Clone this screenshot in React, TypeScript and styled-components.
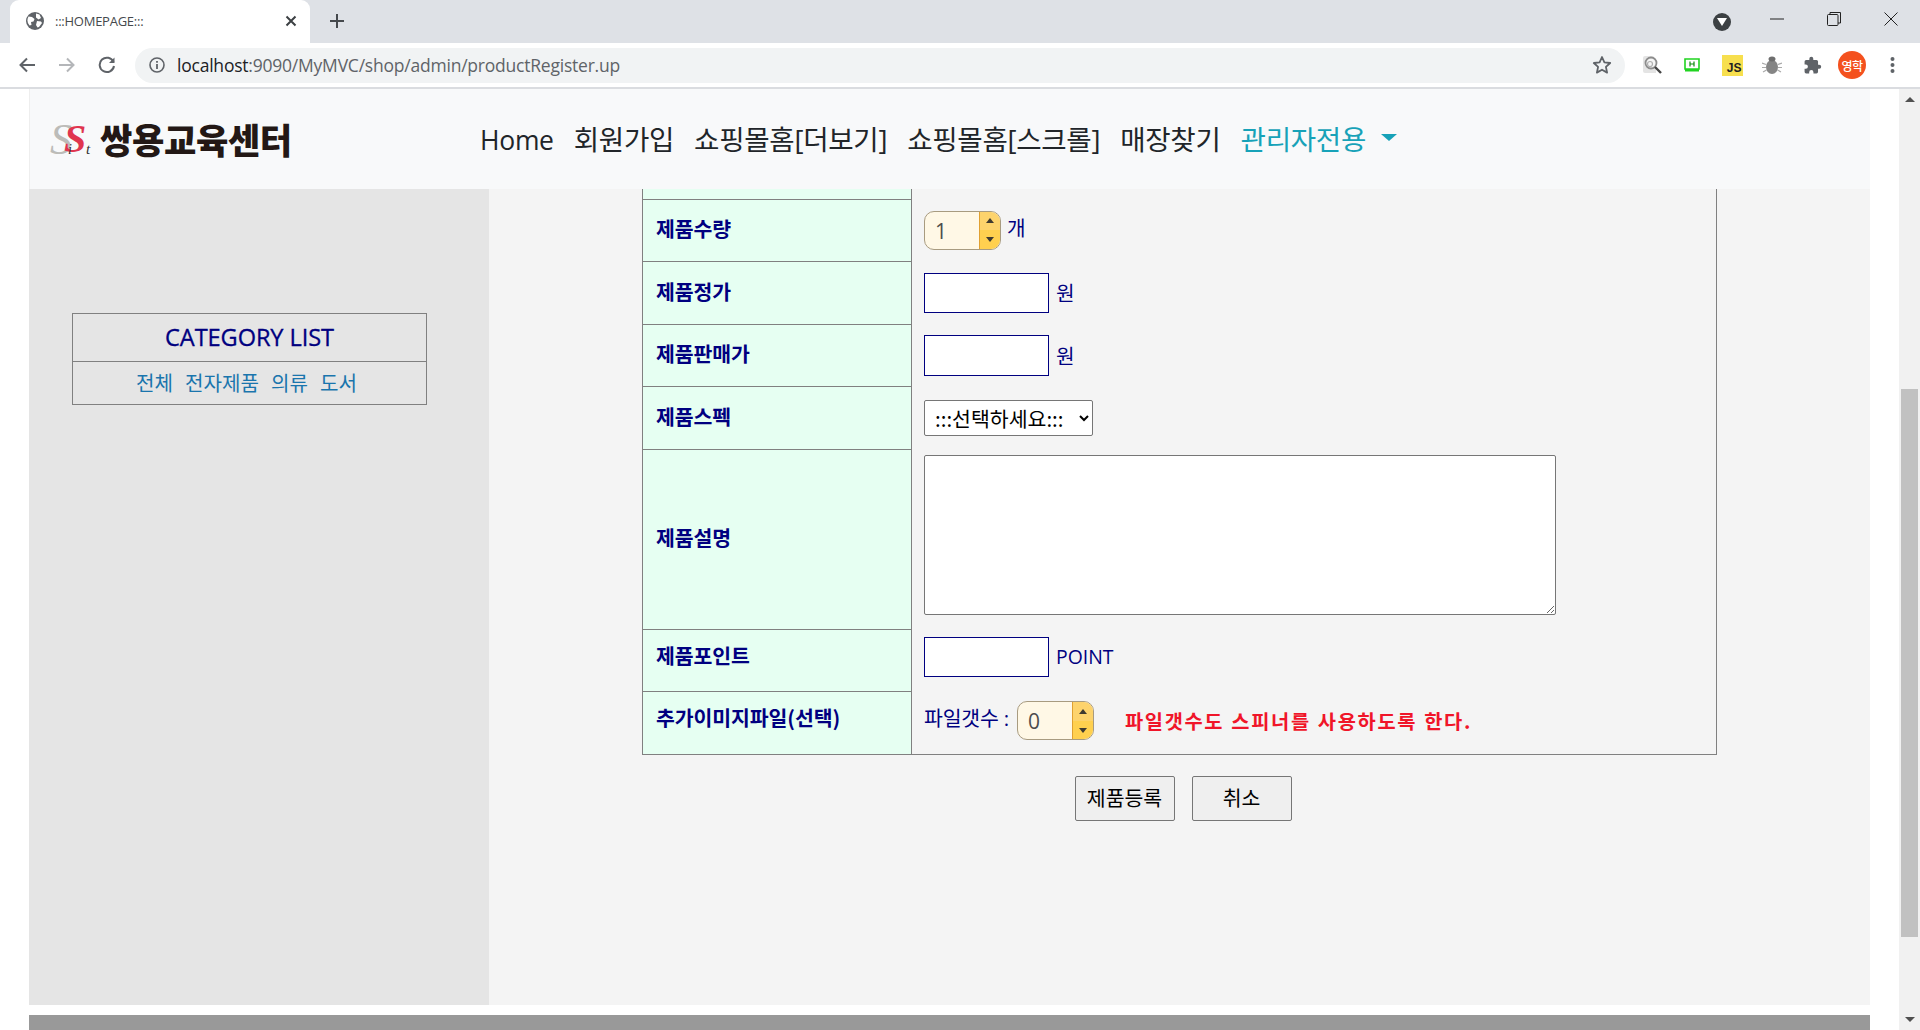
import React from "react";
import styled, { createGlobalStyle } from "styled-components";

const Global = createGlobalStyle`
  html, body { margin: 0; padding: 0; height: 100%; overflow: hidden; background: #fff; }
  body { font-family: "Open Sans", "Noto Sans CJK KR", sans-serif; }
  #root { height: 100%; }
  * { box-sizing: border-box; }
`;

const KR = `"Noto Sans CJK KR", "Noto Sans", sans-serif`;
const LAT = `"Open Sans", "Noto Sans CJK KR", sans-serif`;

const Shell = styled.div`display:flex;flex-direction:column;width:1920px;height:1030px;overflow:hidden;`;

/* browser chrome */
const TabStrip = styled.div`height:43px;background:#dee1e6;display:flex;align-items:flex-end;padding-left:10px;flex:none;`;
const Tab = styled.div`width:300px;height:43px;background:#fff;border-radius:9px 9px 0 0;display:flex;align-items:center;padding:0 13px 2px 16px;gap:11px;`;
const TabTitle = styled.span`flex:1;font:13px ${LAT};letter-spacing:-.25px;color:#45494d;`;
const NewTab = styled.div`margin:0 0 7px 15px;width:24px;height:30px;display:flex;align-items:center;justify-content:center;`;
const WindowControls = styled.div`margin-left:auto;display:flex;align-items:center;height:43px;padding-right:1px;`;
const ProfileCircle = styled.div`width:18px;height:18px;border-radius:50%;background:#3c4043;display:flex;align-items:center;justify-content:center;margin-right:17px;`;
const WinBtn = styled.div`width:57px;height:36px;display:flex;align-items:center;justify-content:center;margin-top:-5px;`;

const Toolbar = styled.div`height:46px;background:#fff;border-bottom:2px solid #dadce0;display:flex;align-items:center;flex:none;padding-left:18px;`;
const NavIcon = styled.div`width:40px;height:30px;display:flex;align-items:center;justify-content:flex-start;flex:none;`;
const Omnibox = styled.div`margin-left:-3px;width:1490px;height:35px;background:#f1f3f4;border-radius:18px;display:flex;align-items:center;padding:0 13px 0 14px;gap:12px;flex:none;`;
const Url = styled.div`flex:1;font:17.5px ${LAT};letter-spacing:-.22px;color:#5f6368;white-space:nowrap;`;
const UrlHost = styled.span`color:#202124;`;
const Ext = styled.div`width:40px;height:30px;display:flex;align-items:center;justify-content:center;flex:none;`;
const Extensions = styled.div`display:flex;align-items:center;margin-left:7px;`;
const Avatar = styled.div`width:28px;height:28px;border-radius:50%;background:#f4511e;color:#fff;font:500 12px ${KR};display:flex;align-items:center;justify-content:center;letter-spacing:-.5px;`;
const JsBadge = styled.div`width:21px;height:21px;background:#f7df4e;color:#222;font:bold 12px "Liberation Sans",sans-serif;display:flex;align-items:flex-end;justify-content:flex-end;padding:0 1px 0 0;line-height:15px;`;

/* page */
const Viewport = styled.div`flex:1;display:flex;min-height:0;`;
const Page = styled.div`flex:1;padding:0 29px;display:flex;min-width:0;`;
const Main = styled.div`width:1841px;display:flex;flex-direction:column;`;

const Navbar = styled.nav`height:100px;background:#f8f9fa;display:flex;align-items:center;flex:none;padding-left:20px;border-left:1px solid #eee;`;
const Logo = styled.div`display:flex;align-items:center;width:430px;`;
const LogoText = styled.span`font:900 35.2px ${KR};color:#231815;letter-spacing:-.4px;margin-left:6px;line-height:1;`;
const NavList = styled.div`display:flex;align-items:center;gap:20px;padding-top:2px;`;
const NavItem = styled.a<{ $active?: boolean; $latin?: boolean }>`font:${p => (p.$latin ? 26.5 : 27.6)}px ${LAT};letter-spacing:-.3px;line-height:1;color:${p => (p.$active ? "#17a2b8" : "#212529")};white-space:nowrap;`;
const Caret = styled.span`display:inline-block;border-top:7px solid #17a2b8;border-left:8.5px solid transparent;border-right:8.5px solid transparent;margin-left:-5px;margin-bottom:6px;`;

const Body = styled.div`height:816px;display:flex;flex:none;`;
const Sidebar = styled.aside`width:460px;background:#e5e5e5;padding:124px 0 0 43px;flex:none;`;
const Category = styled.div`width:355px;border:1px solid #808080;`;
const CategoryTitle = styled.div`height:48px;border-bottom:1px solid #808080;display:flex;align-items:center;justify-content:center;padding-bottom:1px;font:500 23.6px ${LAT};color:#000080;letter-spacing:-.1px;-webkit-text-stroke:.3px #000080;`;
const CategoryLinks = styled.div`height:42px;display:flex;align-items:center;justify-content:center;gap:12px;padding:0 6px 2px 0;`;
const CategoryLink = styled.a`font:20.1px ${KR};color:#1a75ad;`;

const Content = styled.section`flex:1;background:#f4f4f4;padding-left:153px;`;
const Form = styled.table`width:1075px;border-collapse:collapse;table-layout:fixed;`;
const Row = styled.tr<{ $h: number }>`height:${p => p.$h}px;`;
const Label = styled.th<{ $up?: number; $cut?: boolean }>`width:269px;background:#e6fff2;border:1px solid #808080;${p => (p.$cut ? "border-top:0;" : "")}text-align:left;padding:0 0 ${p => 4 + (p.$up ?? 0)}px 13px;font:bold 20.5px ${KR};color:#000080;letter-spacing:-.1px;`;
const Field = styled.td<{ $last?: boolean; $pb?: number }>`border-left:1px solid #808080;border-right:1px solid #808080;${p => (p.$last ? "border-bottom:1px solid #808080;" : "")}padding:0 0 ${p => p.$pb ?? 0}px 12px;color:#000080;font:20.5px ${LAT};`;
const Inline = styled.div`display:flex;align-items:center;`;
const Unit = styled.span<{ $up?: number; $gap?: number; $latin?: boolean }>`margin-left:${p => p.$gap ?? 7}px;font:${p => (p.$latin ? 19.4 : 20.2)}px ${LAT};color:#000080;position:relative;top:${p => -(p.$up ?? 0)}px;`;
const TextInput = styled.input<{ $tall?: boolean }>`width:125px;height:${p => (p.$tall ? 41 : 40)}px;background:#fff;border:1.5px solid #000080;padding:0;display:block;`;
const SelectBox = styled.select`width:169px;height:36px;background:#fff;border:1px solid #767676;border-radius:2px;font:20.5px ${KR};padding:0 0 0 6px;color:#000;display:block;`;
const TextArea = styled.textarea`width:632px;height:160px;display:block;background:#fff;border:1px solid #767676;border-radius:2px;margin-top:-9px;`;
const Warn = styled.span`margin-left:31px;font:bold 19.8px ${KR};color:#f01529;letter-spacing:1.65px;word-spacing:1px;position:relative;white-space:nowrap;`;
const FileLabel = styled.span`font:20.5px ${LAT};color:#000080;margin-right:8px;position:relative;top:-4px;letter-spacing:-.2px;white-space:nowrap;`;

const SpinBox = styled.div`width:77px;height:39px;border:1px solid #a89b80;border-radius:10px;background:#fff8e6;display:flex;overflow:hidden;flex:none;`;
const SpinValue = styled.div`flex:1;font:21px ${LAT};color:#4d4d4d;display:flex;align-items:center;padding-left:10px;padding-top:1px;`;
const SpinBtns = styled.div`width:21px;border-left:1px solid #e0a030;display:flex;flex-direction:column;`;
const SpinBtn = styled.div<{ $down?: boolean }>`flex:1;background:${p => (p.$down ? "#ffd04f" : "#fdd36c")};display:flex;align-items:center;justify-content:center;`;
const Arrow = styled.span<{ $down?: boolean }>`border-left:4.5px solid transparent;border-right:4.5px solid transparent;${p => (p.$down ? "border-top:5px solid #3f3a30;" : "border-bottom:5px solid #3f3a30;")}`;

const Actions = styled.div`width:1076px;display:flex;justify-content:center;gap:17px;padding:21px 0 0 6px;`;
const Button = styled.button`width:100px;height:45px;background:#efefef;border:1px solid #767676;border-radius:2px;font:20.5px ${KR};color:#000;padding:0 0 3px;`;

const Gap = styled.div`height:10px;background:#fff;flex:none;`;
const Footer = styled.footer`flex:1;background:#999;`;

/* page scrollbar */
const Scrollbar = styled.div`width:21px;background:#f1f1f1;flex:none;display:flex;flex-direction:column;align-items:center;`;
const ScrollBtn = styled.div`height:21px;width:100%;display:flex;align-items:center;justify-content:center;flex:none;`;
const ScrollTrack = styled.div`flex:1;width:100%;padding:279px 2px 72px;display:flex;`;
const ScrollThumb = styled.div`flex:1;background:#c1c1c1;`;
const ScrollArrow = styled.span<{ $down?: boolean }>`border-left:5px solid transparent;border-right:5px solid transparent;${p => (p.$down ? "border-top:5px solid #505050;" : "border-bottom:5px solid #505050;")}`;

const Spinner = ({ value }: { value: number }) => (
  <SpinBox>
    <SpinValue>{value}</SpinValue>
    <SpinBtns>
      <SpinBtn><Arrow /></SpinBtn>
      <SpinBtn $down><Arrow $down /></SpinBtn>
    </SpinBtns>
  </SpinBox>
);

const Globe = () => (
  <svg width="18" height="18" viewBox="0 0 18 18">
    <circle cx="9" cy="9" r="9" fill="#5f6368" />
    <path d="M2.500 4.500l3.500.5 2.500 2-1 2.500-2.500.5.5 3-2 .5A8 8 0 0 1 2.500 4.500zM10 1.500l3.500 1 1.500 3.500-2.500 1.500L10 5.500zM11 9l4 .5 1 1.500-3 4-1.500.5L10 13z" fill="#fff" />
  </svg>
);

export default function App() {
  return (
    <Shell>
      <Global />
      <TabStrip>
        <Tab>
          <Globe />
          <TabTitle>:::HOMEPAGE:::</TabTitle>
          <svg width="12" height="12" viewBox="0 0 12 12"><path d="M1.500 1.500l9 9M10.500 1.500l-9 9" stroke="#3c4043" strokeWidth="2" /></svg>
        </Tab>
        <NewTab>
          <svg width="16" height="16" viewBox="0 0 16 16"><path d="M8 1v14M1 8h14" stroke="#45494d" strokeWidth="2" /></svg>
        </NewTab>
        <WindowControls>
          <ProfileCircle>
            <svg width="10" height="8" viewBox="0 0 10 8"><path d="M0 0h10L5 8z" fill="#fff" /></svg>
          </ProfileCircle>
          <WinBtn>
            <svg width="14" height="2" viewBox="0 0 14 2"><path d="M0 1h14" stroke="#222" strokeWidth="1" /></svg>
          </WinBtn>
          <WinBtn>
            <svg width="14" height="14" viewBox="0 0 14 14" fill="none" stroke="#222"><rect x=".5" y="2.500" width="10.500" height="11" rx="1" /><path d="M3 2.500V.5h10.500V11H11" /></svg>
          </WinBtn>
          <WinBtn>
            <svg width="14" height="14" viewBox="0 0 14 14"><path d="M.5.5l13 13M13.500.5l-13 13" stroke="#222" strokeWidth="1" /></svg>
          </WinBtn>
        </WindowControls>
      </TabStrip>

      <Toolbar>
        <NavIcon>
          <svg width="18" height="18" viewBox="0 0 18 18" fill="none" stroke="#5f6368" strokeWidth="2"><path d="M17 9H3M9 2.500L2.500 9 9 15.500" /></svg>
        </NavIcon>
        <NavIcon>
          <svg width="18" height="18" viewBox="0 0 18 18" fill="none" stroke="#b4b6b9" strokeWidth="2"><path d="M1 9h14M9 2.500L15.500 9 9 15.500" /></svg>
        </NavIcon>
        <NavIcon>
          <svg width="18" height="18" viewBox="0 0 18 18" fill="none" stroke="#5f6368" strokeWidth="2"><path d="M15.500 6A7.200 7.200 0 1 0 16 10" /><path d="M16.500 1.500v5.500H11" fill="#5f6368" stroke="none" /></svg>
        </NavIcon>
        <Omnibox>
          <svg width="16" height="16" viewBox="0 0 16 16" fill="none"><circle cx="8" cy="8" r="7" stroke="#5f6368" strokeWidth="1.600" /><path d="M8 7v5M8 4v1.800" stroke="#5f6368" strokeWidth="1.800" /></svg>
          <Url><UrlHost>localhost</UrlHost>:9090/MyMVC/shop/admin/productRegister.up</Url>
          <svg width="20" height="20" viewBox="0 0 20 20" fill="none"><path d="M10 2l2.400 5.400 5.800.6-4.300 3.900 1.200 5.700L10 14.700l-5.100 2.900 1.200-5.700L1.800 8l5.800-.6z" stroke="#5f6368" strokeWidth="1.800" strokeLinejoin="round" /></svg>
        </Omnibox>
        <Extensions>
          <Ext>
            <svg width="20" height="20" viewBox="0 0 20 20" fill="none"><path d="M1 3q0-2 2-2h8l3 3v14H3q-2 0-2-2z" fill="#e4e4e4" /><circle cx="9" cy="8" r="5.500" stroke="#8c8c8c" strokeWidth="1.800" fill="#f5f5f5" /><circle cx="8" cy="9" r="2.500" stroke="#b0b0b0" strokeWidth="1.200" /><path d="M13 12l6 6" stroke="#444" strokeWidth="2.400" /></svg>
          </Ext>
          <Ext>
            <svg width="16" height="14" viewBox="0 0 16 14"><path d="M1 1h14v10H1z" fill="#fff" stroke="#21d321" strokeWidth="1.600" /><path d="M1 11h14v2.500H1z" fill="#21d321" /><path d="M6 3.500v5M10 3.500v5M6 6h4" stroke="#0a8a0a" strokeWidth="1.200" /></svg>
          </Ext>
          <Ext><JsBadge>JS</JsBadge></Ext>
          <Ext>
            <svg width="20" height="20" viewBox="0 0 20 20"><ellipse cx="10" cy="12" rx="6" ry="7" fill="#858585" /><ellipse cx="10" cy="4" rx="3.500" ry="2.500" fill="#6e6e6e" /><path d="M0 8l4 1.500M0 12.500h4M1 17l3.500-2M20 8l-4 1.500M20 12.500h-4M19 17l-3.500-2" stroke="#aaa" strokeWidth="1.200" /></svg>
          </Ext>
          <Ext>
            <svg width="19" height="19" viewBox="0 0 24 24" fill="#5f6368"><path d="M20.500 11H19V7a2 2 0 0 0-2-2h-4V3.500a2.500 2.500 0 0 0-5 0V5H4a2 2 0 0 0-2 2v3.800h1.500a2.700 2.700 0 0 1 0 5.400H2V20a2 2 0 0 0 2 2h3.800v-1.500a2.700 2.700 0 0 1 5.400 0V22H17a2 2 0 0 0 2-2v-4h1.500a2.500 2.500 0 0 0 0-5z" /></svg>
          </Ext>
          <Ext><Avatar>영학</Avatar></Ext>
          <Ext>
            <svg width="5" height="18" viewBox="0 0 5 18" fill="#5f6368"><circle cx="2.500" cy="3" r="2" /><circle cx="2.500" cy="9" r="2" /><circle cx="2.500" cy="15" r="2" /></svg>
          </Ext>
        </Extensions>
      </Toolbar>

      <Viewport>
        <Page>
          <Main>
            <Navbar>
              <Logo>
                <svg width="44" height="36" viewBox="0 0 44 36" overflow="visible">
                  <text x="0" y="33" fontFamily="Liberation Serif" fontStyle="italic" fontSize="44" fill="#bcbcb8">S</text>
                  <text x="14" y="31" fontFamily="Liberation Serif" fontStyle="italic" fontWeight="bold" fontSize="40" fill="#e0354f">S</text>
                  <text x="36" y="33" fontFamily="Liberation Serif" fontStyle="italic" fontSize="15" fill="#333">t</text>
                  <text x="18" y="33" fontFamily="Liberation Serif" fontStyle="italic" fontSize="14" fill="#333">i</text>
                </svg>
                <LogoText>쌍용교육센터</LogoText>
              </Logo>
              <NavList>
                <NavItem $latin>Home</NavItem>
                <NavItem>회원가입</NavItem>
                <NavItem>쇼핑몰홈[더보기]</NavItem>
                <NavItem>쇼핑몰홈[스크롤]</NavItem>
                <NavItem>매장찾기</NavItem>
                <NavItem $active>관리자전용</NavItem>
                <Caret />
              </NavList>
            </Navbar>
            <Body>
              <Sidebar>
                <Category>
                  <CategoryTitle>CATEGORY LIST</CategoryTitle>
                  <CategoryLinks>
                    <CategoryLink>전체</CategoryLink>
                    <CategoryLink>전자제품</CategoryLink>
                    <CategoryLink>의류</CategoryLink>
                    <CategoryLink>도서</CategoryLink>
                  </CategoryLinks>
                </Category>
              </Sidebar>
              <Content>
                <Form>
                  <tbody>
                    <Row $h={10}><Label $cut /><Field /></Row>
                    <Row $h={62}>
                      <Label>제품수량</Label>
                      <Field><Inline><Spinner value={1} /><Unit $up={3} $gap={6}>개</Unit></Inline></Field>
                    </Row>
                    <Row $h={63}>
                      <Label>제품정가</Label>
                      <Field><Inline><TextInput /><Unit>원</Unit></Inline></Field>
                    </Row>
                    <Row $h={62}>
                      <Label>제품판매가</Label>
                      <Field><Inline><TextInput $tall /><Unit>원</Unit></Inline></Field>
                    </Row>
                    <Row $h={63}>
                      <Label>제품스펙</Label>
                      <Field>
                        <SelectBox defaultValue="">
                          <option value="">:::선택하세요:::</option>
                        </SelectBox>
                      </Field>
                    </Row>
                    <Row $h={180}>
                      <Label>제품설명</Label>
                      <Field><TextArea /></Field>
                    </Row>
                    <Row $h={62}>
                      <Label $up={6}>제품포인트</Label>
                      <Field $pb={7}><Inline><TextInput /><Unit $latin>POINT</Unit></Inline></Field>
                    </Row>
                    <Row $h={63}>
                      <Label $up={8}>추가이미지파일(선택)</Label>
                      <Field $last $pb={3}>
                        <Inline>
                          <FileLabel>파일갯수 :</FileLabel>
                          <Spinner value={0} />
                          <Warn>파일갯수도 스피너를 사용하도록 한다.</Warn>
                        </Inline>
                      </Field>
                    </Row>
                  </tbody>
                </Form>
                <Actions>
                  <Button>제품등록</Button>
                  <Button>취소</Button>
                </Actions>
              </Content>
            </Body>
            <Gap />
            <Footer />
          </Main>
        </Page>
        <Scrollbar>
          <ScrollBtn><ScrollArrow /></ScrollBtn>
          <ScrollTrack><ScrollThumb /></ScrollTrack>
          <ScrollBtn><ScrollArrow $down /></ScrollBtn>
        </Scrollbar>
      </Viewport>
    </Shell>
  );
}
